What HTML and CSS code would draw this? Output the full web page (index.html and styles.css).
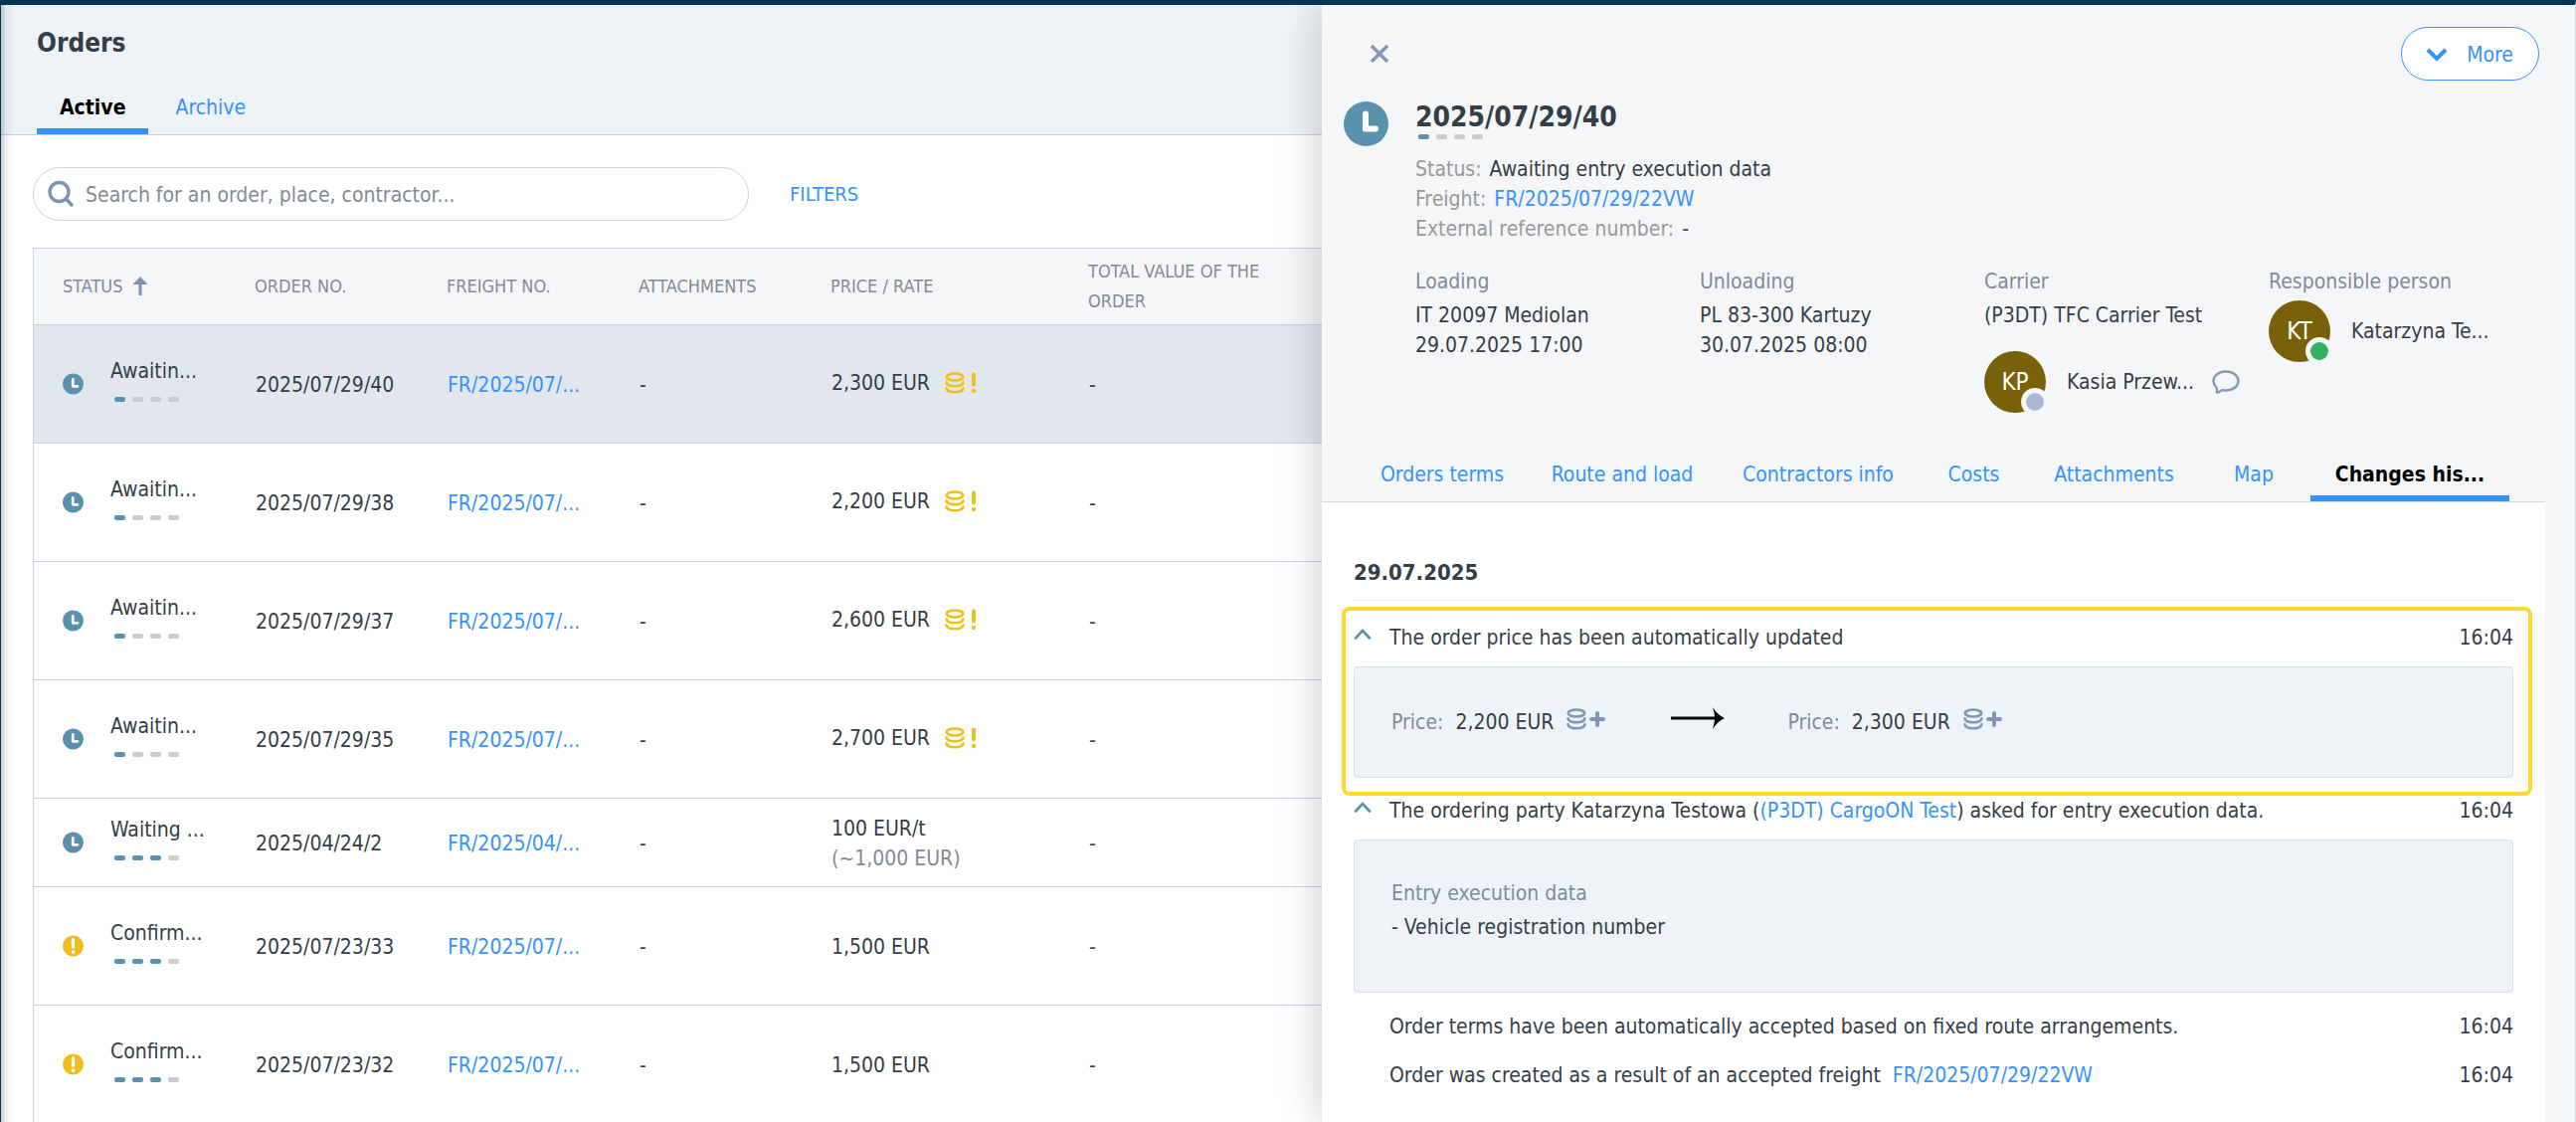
FILE: index.html
```html
<!DOCTYPE html>
<html lang="en">
<head>
<meta charset="utf-8">
<title>Orders</title>
<link rel="stylesheet" href="styles.css">
</head>
<body>
<svg class="sprite" aria-hidden="true">
  <symbol id="clock" viewBox="0 0 45 45"><circle cx="22.500" cy="22.500" r="22.500" fill="#5a92ae"/><path d="M22 12.500V27.500H32" fill="none" stroke="#fff" stroke-width="6" stroke-linecap="round" stroke-linejoin="round"/></symbol>
  <symbol id="alert" viewBox="0 0 45 45"><circle cx="22.500" cy="22.500" r="22.500" fill="#f0bd1a"/><path d="M22.500 9V25" stroke="#fff" stroke-width="7" stroke-linecap="round"/><circle cx="22.500" cy="35.500" r="4" fill="#fff"/></symbol>
  <symbol id="coins" viewBox="0 0 20 22"><g fill="none" stroke="currentColor" stroke-width="2.600" stroke-linecap="round"><ellipse cx="10" cy="5" rx="8.300" ry="3.500"/><path d="M1.500 10.200c1 5.400 16 5.400 17 0M1.500 16.200c1 5.400 16 5.400 17 0"/></g></symbol>
  <symbol id="bang" viewBox="0 0 6 22"><path d="M3 2.500V12.500" stroke="currentColor" stroke-width="4" stroke-linecap="round"/><circle cx="3" cy="19" r="2.200" fill="currentColor"/></symbol>
  <symbol id="plus" viewBox="0 0 16 16"><path d="M8 2V14M2 8H14" stroke="currentColor" stroke-width="4" stroke-linecap="round"/></symbol>
  <symbol id="up" viewBox="0 0 18 12"><path d="M2 9.500L9 2L16 9.500" fill="none" stroke="currentColor" stroke-width="2.600" stroke-linecap="round"/></symbol>
</svg>
<div class="app">
  <main class="list">
    <header class="list-head">
      <h1>Orders</h1>
      <nav class="tabs"><a class="tab on" href="#active">Active</a><a class="tab" href="#archive">Archive</a></nav>
    </header>
    <div class="tools">
      <label class="search">
        <svg width="26" height="28" viewBox="0 0 26 28"><g fill="none" stroke="#7d92b3" stroke-width="3.400" stroke-linecap="round"><circle cx="11.500" cy="12" r="9.500"/><path d="M18.500 19L24 25"/></g></svg>
        <input type="text" aria-label="Search" placeholder="Search for an order, place, contractor...">
      </label>
      <button class="filters" type="button">FILTERS</button>
    </div>
    <table class="orders">
      <colgroup><col class="c-status"><col class="c-std"><col class="c-std"><col class="c-std"><col class="c-price"><col></colgroup>
      <thead><tr>
        <th><span class="sort">STATUS <svg width="16" height="20" viewBox="0 0 16 20"><path d="M8 19V5" stroke="#7d92b3" stroke-width="3"/><path d="M8 0L15.500 8H0.500Z" fill="#7d92b3"/></svg></span></th>
        <th>ORDER NO.</th><th>FREIGHT NO.</th><th>ATTACHMENTS</th><th>PRICE / RATE</th><th>TOTAL VALUE OF THE<br>ORDER</th>
      </tr></thead>
      <tbody>
        <tr class="sel"><td><div class="status"><svg class="ico"><use href="#clock"/></svg><div class="state">Awaitin...<span class="steps"><i class="d"></i><i></i><i></i><i></i></span></div></div></td><td>2025/07/29/40</td><td><a href="#f">FR/2025/07/...</a></td><td>-</td><td><span class="price">2,300 EUR<svg class="coins"><use href="#coins"/></svg><svg class="bang"><use href="#bang"/></svg></span></td><td>-</td></tr>
        <tr><td><div class="status"><svg class="ico"><use href="#clock"/></svg><div class="state">Awaitin...<span class="steps"><i class="d"></i><i></i><i></i><i></i></span></div></div></td><td>2025/07/29/38</td><td><a href="#f">FR/2025/07/...</a></td><td>-</td><td><span class="price">2,200 EUR<svg class="coins"><use href="#coins"/></svg><svg class="bang"><use href="#bang"/></svg></span></td><td>-</td></tr>
        <tr><td><div class="status"><svg class="ico"><use href="#clock"/></svg><div class="state">Awaitin...<span class="steps"><i class="d"></i><i></i><i></i><i></i></span></div></div></td><td>2025/07/29/37</td><td><a href="#f">FR/2025/07/...</a></td><td>-</td><td><span class="price">2,600 EUR<svg class="coins"><use href="#coins"/></svg><svg class="bang"><use href="#bang"/></svg></span></td><td>-</td></tr>
        <tr><td><div class="status"><svg class="ico"><use href="#clock"/></svg><div class="state">Awaitin...<span class="steps"><i class="d"></i><i></i><i></i><i></i></span></div></div></td><td>2025/07/29/35</td><td><a href="#f">FR/2025/07/...</a></td><td>-</td><td><span class="price">2,700 EUR<svg class="coins"><use href="#coins"/></svg><svg class="bang"><use href="#bang"/></svg></span></td><td>-</td></tr>
        <tr class="short"><td><div class="status"><svg class="ico"><use href="#clock"/></svg><div class="state">Waiting ...<span class="steps"><i class="d"></i><i class="d"></i><i class="d"></i><i></i></span></div></div></td><td>2025/04/24/2</td><td><a href="#f">FR/2025/04/...</a></td><td>-</td><td>100 EUR/t<br><span class="muted">(~1,000 EUR)</span></td><td>-</td></tr>
        <tr><td><div class="status"><svg class="ico"><use href="#alert"/></svg><div class="state">Confirm...<span class="steps"><i class="d"></i><i class="d"></i><i class="d"></i><i></i></span></div></div></td><td>2025/07/23/33</td><td><a href="#f">FR/2025/07/...</a></td><td>-</td><td>1,500 EUR</td><td>-</td></tr>
        <tr><td><div class="status"><svg class="ico"><use href="#alert"/></svg><div class="state">Confirm...<span class="steps"><i class="d"></i><i class="d"></i><i class="d"></i><i></i></span></div></div></td><td>2025/07/23/32</td><td><a href="#f">FR/2025/07/...</a></td><td>-</td><td>1,500 EUR</td><td>-</td></tr>
      </tbody>
    </table>
  </main>

  <aside class="drawer">
    <div class="bar">
      <button class="close" type="button" aria-label="Close"><svg width="20" height="20" viewBox="0 0 20 20"><path d="M2 2L18 18M18 2L2 18" stroke="#8394b3" stroke-width="3.200"/></svg></button>
      <button class="more" type="button"><svg width="22" height="14" viewBox="0 0 22 14"><path d="M2 2L11 11L20 2" fill="none" stroke="#3692ff" stroke-width="4"/></svg>More</button>
    </div>
    <div class="summary">
      <svg class="big"><use href="#clock"/></svg>
      <div class="info">
        <h2>2025/07/29/40</h2>
        <span class="steps"><i class="d"></i><i></i><i></i><i></i></span>
        <dl class="facts">
          <div><dt>Status:</dt><dd>Awaiting entry execution data</dd></div>
          <div><dt>Freight:</dt><dd><a href="#f">FR/2025/07/29/22VW</a></dd></div>
          <div><dt>External reference number:</dt><dd>-</dd></div>
        </dl>
        <div class="cols">
          <section><h3>Loading</h3><p>IT 20097 Mediolan</p><p>29.07.2025 17:00</p></section>
          <section><h3>Unloading</h3><p>PL 83-300 Kartuzy</p><p>30.07.2025 08:00</p></section>
          <section><h3>Carrier</h3><p>(P3DT) TFC Carrier Test</p>
            <div class="person below"><span class="avatar">KP<i class="dot"></i></span>Kasia Przew...<svg class="chat" width="28" height="24" viewBox="0 0 28 24"><path d="M5 22.500C4.500 20 5.500 18.800 4.300 17.300C2.600 15.500 1.500 13.500 1.500 11C1.500 5.500 7 1.500 14 1.500S26.500 5.500 26.500 11S21 20.500 14 20.500C12 20.500 11 20 10 20.400C8.500 21 7.500 22.300 5 22.500Z" fill="none" stroke="#8299b8" stroke-width="2.400" stroke-linejoin="round"/></svg></div></section>
          <section><h3>Responsible person</h3>
            <div class="person"><span class="avatar">KT<i class="dot online"></i></span>Katarzyna Te...</div></section>
        </div>
      </div>
    </div>
    <nav class="dtabs">
      <a class="tab" href="#t">Orders terms</a><a class="tab" href="#t">Route and load</a><a class="tab" href="#t">Contractors info</a><a class="tab" href="#t">Costs</a><a class="tab" href="#t">Attachments</a><a class="tab" href="#t">Map</a><a class="tab on" href="#t">Changes his...</a>
    </nav>
    <div class="history">
      <h4>29.07.2025</h4>
      <article class="entry marked">
        <div class="line"><svg class="chev"><use href="#up"/></svg><span class="what">The order price has been automatically updated</span><time>16:04</time></div>
        <div class="box change">
          <span class="amount"><span class="muted">Price:</span>2,200 EUR<span class="mark"><svg class="coins"><use href="#coins"/></svg><svg class="plus"><use href="#plus"/></svg></span></span>
          <svg class="arrow" width="56" height="22" viewBox="0 0 56 22"><path d="M1 11H46" stroke="#000" stroke-width="3"/><path d="M43 0C46 5 50 8.500 55 11C50 13.500 46 17 43 22C44.500 16 45 14 45 11C45 8 44.500 5 43 0Z"/></svg>
          <span class="amount"><span class="muted">Price:</span>2,300 EUR<span class="mark"><svg class="coins"><use href="#coins"/></svg><svg class="plus"><use href="#plus"/></svg></span></span>
        </div>
      </article>
      <article class="entry">
        <div class="line"><svg class="chev"><use href="#up"/></svg><span class="what">The ordering party Katarzyna Testowa (<a href="#c">(P3DT) CargoON Test</a>) asked for entry execution data.</span><time>16:04</time></div>
        <div class="box data"><p class="muted">Entry execution data</p><p>- Vehicle registration number</p></div>
      </article>
      <div class="line plain"><span class="what">Order terms have been automatically accepted based on fixed route arrangements.</span><time>16:04</time></div>
      <div class="line plain"><span class="what">Order was created as a result of an accepted freight &nbsp;<a href="#f">FR/2025/07/29/22VW</a></span><time>16:04</time></div>
    </div>
  </aside>
</div>
</body>
</html>
```
FILE: styles.css
```css
* { box-sizing: border-box; }
html, body { height: 100%; }
body {
  margin: 0;
  font-family: "DejaVu Sans Condensed", "Noto Sans", sans-serif;
  font-size: 21px;
  line-height: 30px;
  color: #343e48;
  background: #fff;
  overflow: hidden;
}
h1, h2, h3, h4, p, dl, dd { margin: 0; }
a { color: #3692ff; text-decoration: none; }
button { font: inherit; padding: 0; border: 0; background: none; cursor: pointer; }
svg { display: block; flex: none; }
.sprite { position: absolute; width: 0; height: 0; }
.muted { color: #808b99; }

.app {
  display: flex;
  min-height: 100vh;
  border-top: 5px solid #003655;
  border-left: 1px solid #003655;
  border-right: 1px solid #c9d8e6;
}

/* Orders list */
.list {
  flex: 1;
  min-width: 0;
  height: calc(100vh - 5px);
  overflow: hidden;
  position: relative;
}
.list::before {
  content: "";
  position: absolute;
  inset: 0 auto 0 0;
  width: 14px;
  background: linear-gradient(to right, rgba(60, 50, 50, .25), rgba(60, 50, 50, .06) 40%, transparent);
}
.list-head {
  height: 131px;
  padding: 22px 0 0 36px;
  background: #eef3f8;
  border-bottom: 1px solid #c2d3e3;
  display: flex;
  flex-direction: column;
  justify-content: space-between;
}
h1 { font-size: 26px; line-height: 32px; }
.tabs { display: flex; gap: 4px; }
.tab {
  display: block;
  height: 40px;
  line-height: 26px;
  padding: 0 23px;
  text-align: center;
  white-space: nowrap;
}
.tab.on { color: #000; font-weight: bold; border-bottom: 6px solid #3692ff; }

.tools { display: flex; align-items: center; padding: 32px 0 0 32px; }
.search {
  display: flex;
  align-items: center;
  gap: 12px;
  width: 720px;
  height: 54px;
  padding: 0 14px;
  border: 1px solid #c8d6e5;
  border-radius: 27px;
}
.search input {
  flex: 1;
  border: 0;
  outline: 0;
  padding: 2px 0 0;
  font: inherit;
  background: none;
}
.search input::placeholder { color: #808b99; opacity: 1; }
.filters { margin-left: 41px; color: #3692ff; font-size: 20px; }

.orders {
  margin: 27px 0 0 32px;
  width: calc(100% - 32px);
  table-layout: fixed;
  border-collapse: separate;
  border-spacing: 0;
  border-left: 1px solid #c8d6e5;
}
.c-status { width: 193px; }
.c-std { width: 193px; }
.c-price { width: 259px; }
th, td {
  padding: 0 0 0 29px;
  text-align: left;
  vertical-align: middle;
  white-space: nowrap;
  border-bottom: 1px solid #c2d3e3;
}
th {
  height: 78px;
  background: #f4f6f8;
  border-top: 1px solid #c2d3e3;
  color: #808b99;
  font-size: 18px;
  font-weight: normal;
}
td { height: 119px; padding: 2px 0 0 30px; }
td:first-child { padding: 0 0 0 29px; }
.short td { height: 89px; }
.sel td { background: #e1e7ed; }
.sort { display: flex; align-items: center; gap: 10px; }
.status { display: flex; align-items: center; gap: 27px; }
.ico { width: 21px; height: 22px; }
.state .steps { margin: 11px 0 10px 4px; }
.steps { display: flex; gap: 7px; }
.steps i { width: 11px; height: 5px; border-radius: 2px; background: #ccc; }
.steps .d { background: #5a92ae; }
.price { display: flex; align-items: center; padding-bottom: 4px; }
.coins { width: 20px; height: 22px; }
.price .coins, .price .bang { color: #f2be18; }
.price .coins { margin-left: 15px; }
.bang { width: 6px; height: 22px; margin-left: 6px; }

/* Order drawer */
.drawer {
  position: relative;
  width: calc(50% - 34px);
  display: flex;
  flex-direction: column;
  background: #f4f6f8;
  box-shadow: 0 0 40px rgba(0, 0, 0, .22);
  clip-path: inset(0 0 0 -60px);
}
.bar { display: flex; justify-content: space-between; padding: 22px 36px 0 48px; }
.close { height: 20px; margin-top: 17px; }
.more {
  display: flex;
  align-items: center;
  gap: 19px;
  height: 54px;
  padding: 2px 25px 0 24px;
  color: #3692ff;
  background: #fff;
  border: 1px solid #3692ff;
  border-radius: 27px;
}
.summary { display: flex; gap: 27px; padding: 20px 0 0 22px; }
.big { width: 45px; height: 45px; margin-top: 1px; }
.info { flex: 1; }
h2 { font-size: 28px; line-height: 34px; }
.info > .steps { margin: 0 0 0 3px; }
.facts { margin-top: 15px; }
.facts div { display: flex; gap: 8px; }
dt { color: #999; }
.cols {
  display: grid;
  grid-template-columns: repeat(4, 286px);
  margin-top: 23px;
}
.cols section { white-space: nowrap; height: 196px; }
h3 { font-size: 21px; font-weight: normal; color: #808b99; line-height: 30px; margin-bottom: 4px; }
.person { display: flex; align-items: center; }
.person.below { margin-top: 21px; }
.avatar {
  position: relative;
  flex: none;
  width: 62px;
  height: 62px;
  margin-right: 21px;
  border-radius: 50%;
  background: #79610a;
  color: #fff;
  font-size: 24px;
  line-height: 62px;
  text-align: center;
}
.dot {
  position: absolute;
  right: -3px;
  bottom: -3px;
  width: 28px;
  height: 28px;
  border: 5px solid #f4f6f8;
  border-radius: 50%;
  background: #abb8d4;
}
.online { background: #31b360; }
.chat { margin-left: 18px; }

.dtabs {
  display: grid;
  grid-template-columns: 166px 196px 198px 115px 167px 114px 200px;
  margin-right: 30px;
  padding-left: 38px;
  border-bottom: 1px solid #cddce6;
}
.dtabs .tab { padding: 0; }

.history { flex: 1; margin-right: 30px; padding: 56px 32px 0; background: #fff; }
h4 { font-size: 22px; line-height: 30px; padding-bottom: 12px; border-bottom: 1px solid #edf2f6; }
.line { display: flex; align-items: center; height: 30px; }
.what { flex: 1; }
.line .chev { width: 18px; height: 12px; margin: 0 18px 6px 0; color: #5a92ae; }
.marked {
  margin: 6px -19px 0 -12px;
  padding: 12px 15px 14px 8px;
  border: 4px solid #ffd92b;
  border-radius: 8px;
}
.box {
  margin-top: 14px;
  padding: 0 37px;
  background: #eef3f8;
  border: 1px solid #d3e1e9;
  border-radius: 4px;
}
.change { display: flex; align-items: center; height: 112px; }
.amount { display: flex; align-items: center; }
.amount .muted { margin-right: 12px; }
.mark { display: flex; align-items: center; gap: 3px; margin: 0 0 6px 13px; color: #8496b6; }
.plus { width: 16px; height: 16px; }
.arrow { margin: 0 62px 8px 65px; }
.data { height: 154px; padding-top: 38px; }
.data p { margin-bottom: 4px; }
.plain { padding-left: 36px; margin-top: 19px; }
```
